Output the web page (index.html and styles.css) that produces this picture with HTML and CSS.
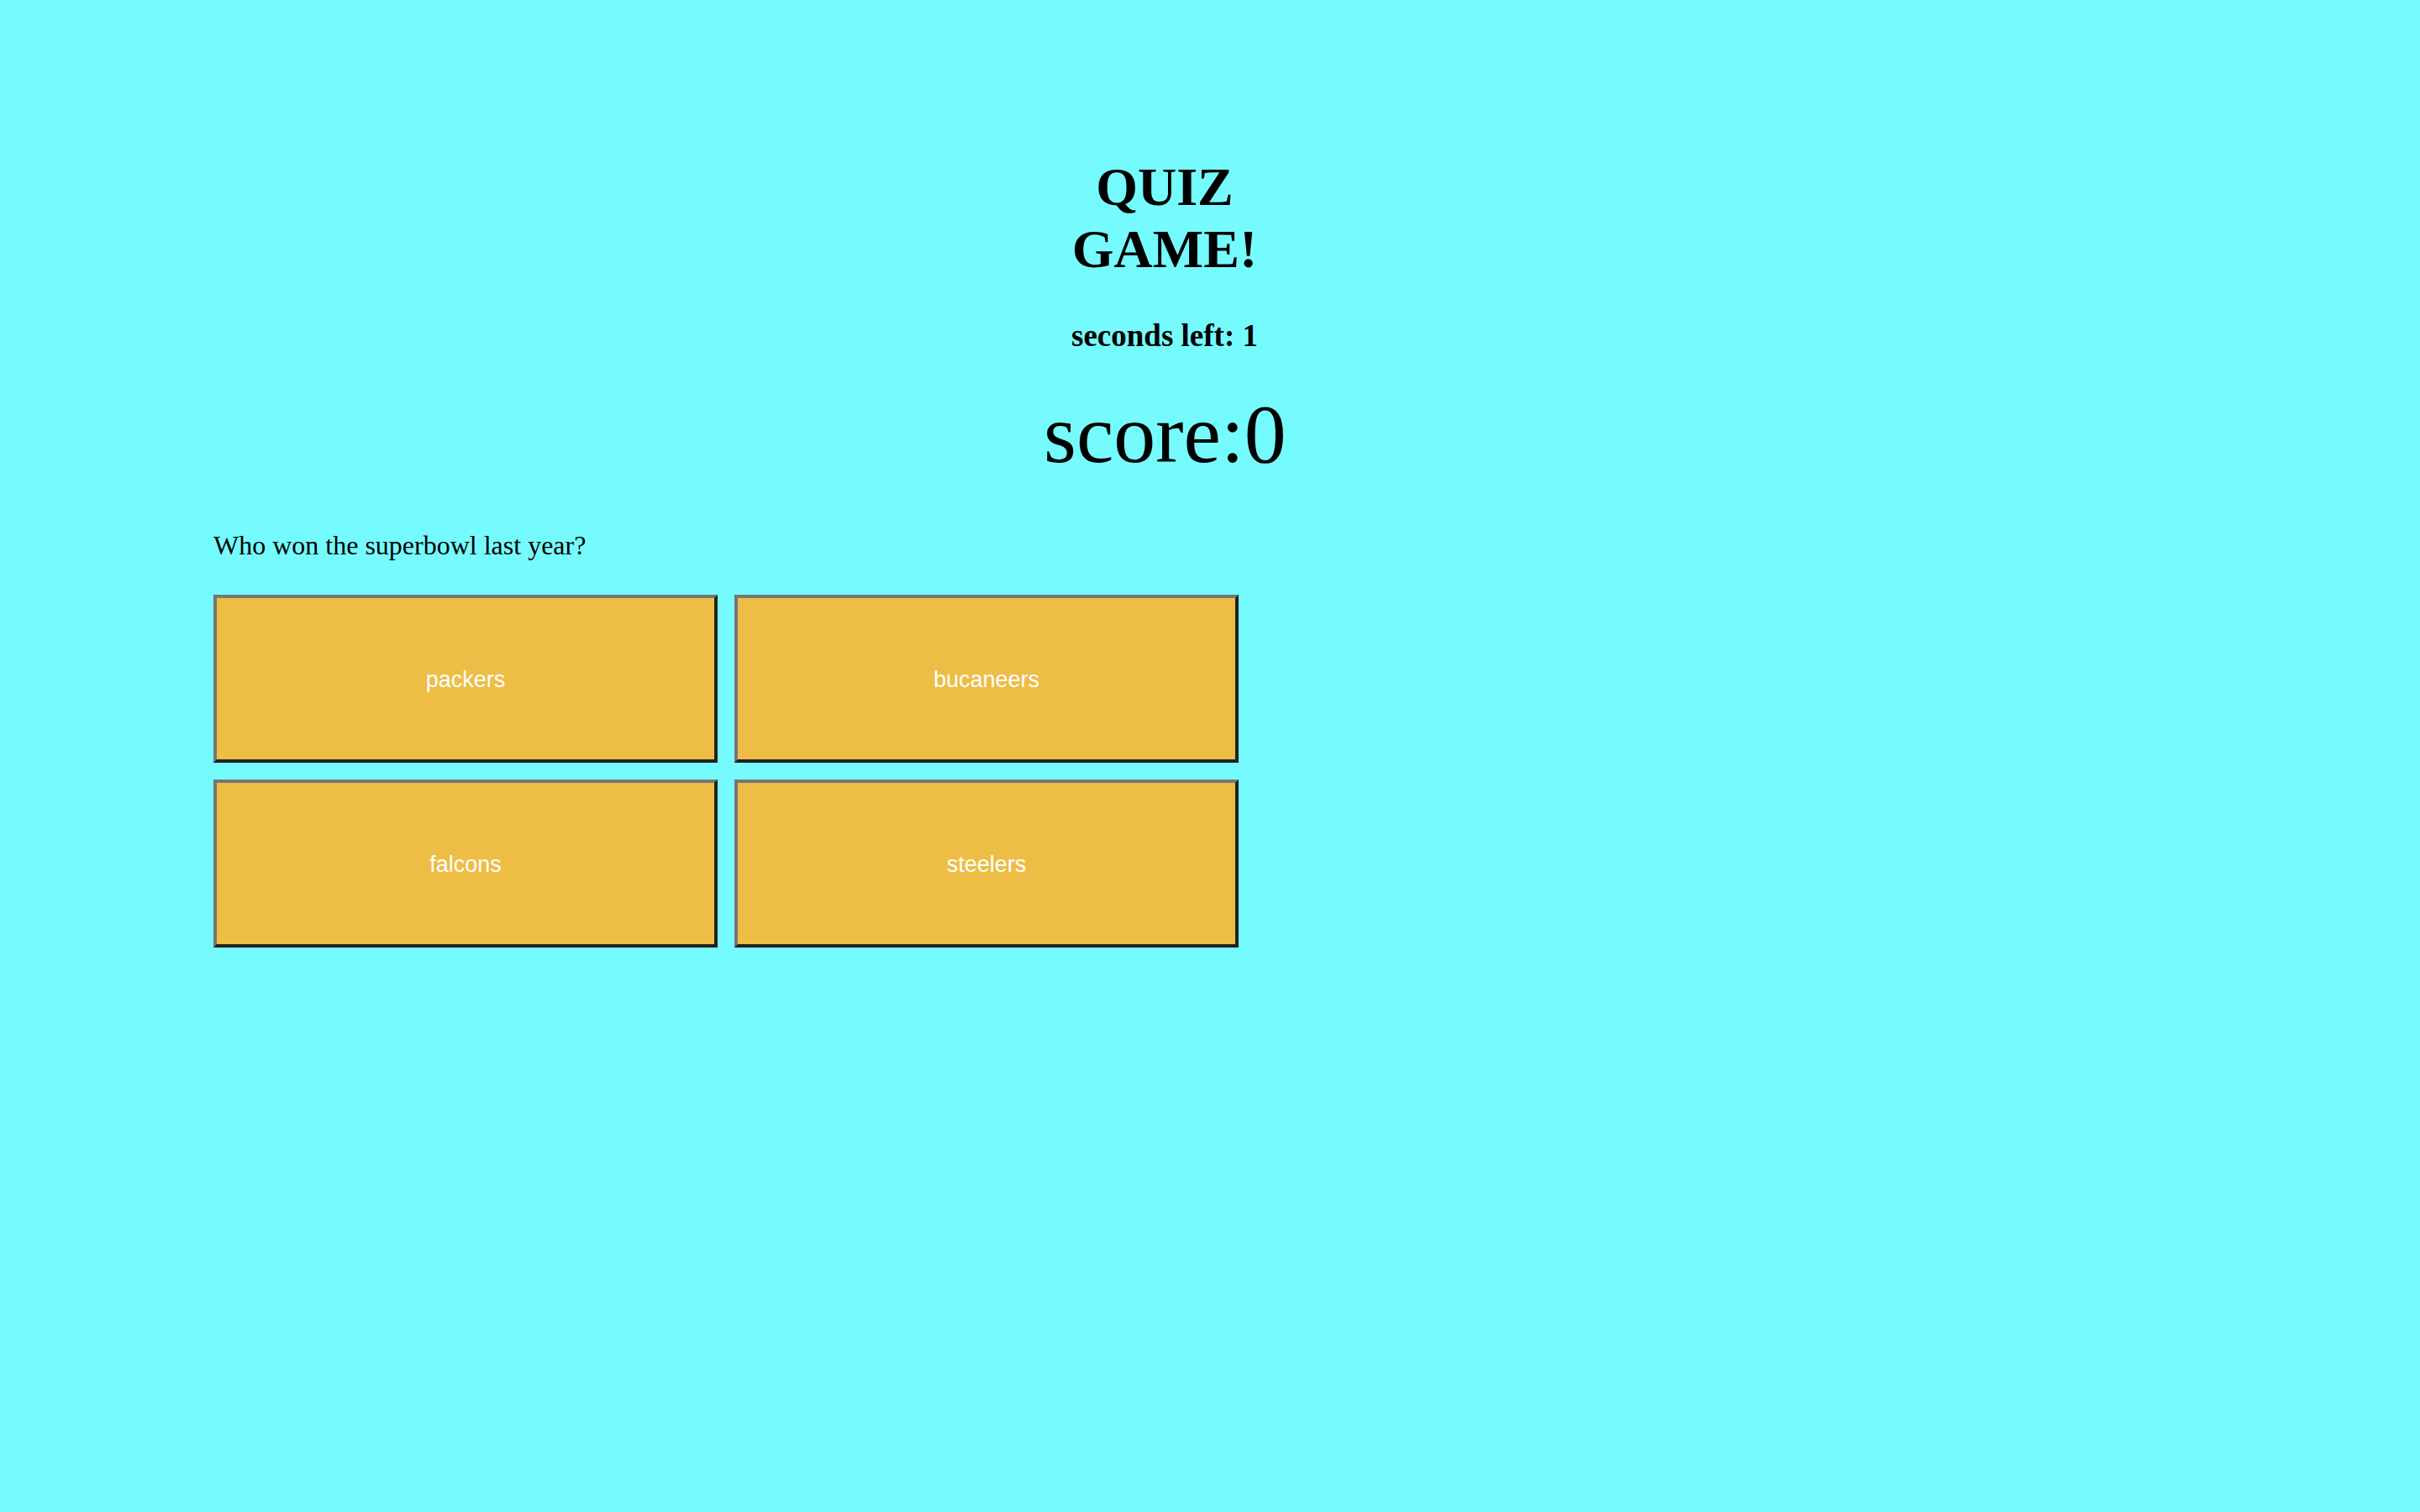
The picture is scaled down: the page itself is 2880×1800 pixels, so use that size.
FILE: index.html
```html
<!DOCTYPE html>
<html lang="en">
<head>
  <meta charset="utf-8">
  <title>Quiz Game</title>
  <link rel="stylesheet" href="styles.css">
</head>
<body>
  <main class="quiz">
    <header class="quiz-header">
      <h1 class="title">QUIZ GAME!</h1>
      <h2 class="timer">seconds left: 1</h2>
      <p class="score">score:0</p>
    </header>
    <section class="round" aria-labelledby="question">
      <p class="question" id="question">Who won the superbowl last year?</p>
      <div class="answers">
        <button class="answer" type="button">packers</button>
        <button class="answer" type="button">bucaneers</button>
        <button class="answer" type="button">falcons</button>
        <button class="answer" type="button">steelers</button>
      </div>
    </section>
  </main>
</body>
</html>
```
FILE: styles.css
```css
* {
  box-sizing: border-box;
}

body {
  margin: 0;
  background: #75fbfd;
  color: #000;
  font-family: "Liberation Serif", "Times New Roman", serif;
  font-size: 32px;
  line-height: 36px;
}

.quiz {
  padding: 186px 362px 64px 254px;
}

.quiz-header {
  max-width: 288px;
  margin: 0 auto;
  text-align: center;
}

.title {
  margin: 0 0 44px;
  font-size: 64px;
  line-height: 74px;
}

.timer {
  margin: 0 0 36px;
  font-size: 37px;
  line-height: 44px;
}

.score {
  margin: 0 0 55px;
  font-size: 100px;
  line-height: 118px;
}

.question {
  margin: 0 0 41px;
}

.answers {
  display: grid;
  grid-template-columns: repeat(2, minmax(0, 600px));
  gap: 20px;
}

.answer {
  min-height: 200px;
  padding: 6px 12px 4px;
  border: 4px solid;
  border-color: #767676 #212121 #212121 #767676;
  background: #edbd45;
  color: #fff;
  font-family: "Liberation Sans", Arial, sans-serif;
  font-size: 27px;
  cursor: pointer;
}
```
